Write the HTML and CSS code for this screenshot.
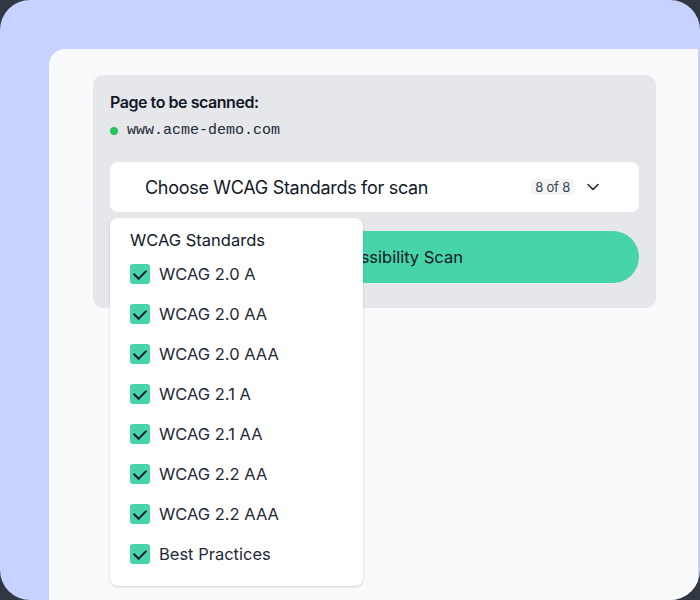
FILE: index.html
```html
<!DOCTYPE html>
<html lang="en">
<head>
  <meta charset="UTF-8" />
  <meta name="viewport" content="width=device-width, initial-scale=1.0" />
  <title>Accessibility Scan</title>
  <link rel="stylesheet" href="styles.css">
</head>
<body>
  <div class="frame">
    <div class="panel">
      <div class="card">
        <div class="label">Page to be scanned:</div>
        <div class="url"><span class="dot"></span>www.acme-demo.com</div>

        <div class="select-wrap">
          <div class="select">
            <span class="select-text">Choose WCAG Standards for scan</span>
            <span class="badge">8 of 8</span>
            <svg class="chevron" width="14" height="14" viewBox="0 0 14 14" fill="none">
              <path d="M2 4.5L7 9.5L12 4.5" stroke="#1f2937" stroke-width="1.6" stroke-linecap="round" stroke-linejoin="round"/>
            </svg>
          </div>

          <div class="dropdown">
            <div class="dropdown-title">WCAG Standards</div>
            <label class="option"><span class="check"></span>WCAG 2.0 A</label>
            <label class="option"><span class="check"></span>WCAG 2.0 AA</label>
            <label class="option"><span class="check"></span>WCAG 2.0 AAA</label>
            <label class="option"><span class="check"></span>WCAG 2.1 A</label>
            <label class="option"><span class="check"></span>WCAG 2.1 AA</label>
            <label class="option"><span class="check"></span>WCAG 2.2 AA</label>
            <label class="option"><span class="check"></span>WCAG 2.2 AAA</label>
            <label class="option"><span class="check"></span>Best Practices</label>
          </div>
        </div>

        <button class="scan-btn">Run Accessibility Scan</button>
      </div>
    </div>
  </div>
</body>
</html>
```

FILE: styles.css
```css
* {
  box-sizing: border-box;
}

body {
  margin: 0;
  background: #323843;
  font-family: Inter, "Noto Sans", sans-serif;
  color: #1f2937;
}

.frame {
  width: 700px;
  height: 600px;
  background: #c7d2fe;
  border-radius: 30px;
  padding: 49px 2px 0 49px;
  overflow: hidden;
}

.panel {
  height: 100%;
  background: #f8fafc;
  border-top-left-radius: 16px;
  padding: 26px 42px 0 44px;
}

.card {
  background: #e5e7eb;
  border-radius: 10px;
  padding: 17px 17px 25px;
}

.label {
  font-size: 16px;
  font-weight: 600;
  line-height: 20px;
  letter-spacing: -0.45px;
  color: #111827;
}

.url {
  display: flex;
  align-items: center;
  margin-top: 9px;
  font-family: "Liberation Mono", "DejaVu Sans Mono", monospace;
  font-size: 15px;
  line-height: 20px;
  color: #1f2937;
}

.dot {
  width: 8px;
  height: 8px;
  border-radius: 50%;
  background: #22c55e;
  margin-right: 9px;
}

.select-wrap {
  position: relative;
  margin-top: 21px;
}

.select {
  display: flex;
  align-items: center;
  height: 50px;
  background: #fff;
  border-radius: 8px;
  padding: 0 39px 0 35px;
}

.select-text {
  flex: 1;
  font-size: 18px;
  letter-spacing: -0.3px;
  color: #111827;
}

.badge {
  background: #f3f4f6;
  border-radius: 3px;
  font-size: 13px;
  line-height: 16px;
  letter-spacing: -0.2px;
  padding: 0 4px;
  color: #374151;
  margin-right: 12px;
}

.dropdown {
  position: absolute;
  top: 56px;
  left: 0;
  width: 253px;
  background: #fff;
  border-radius: 8px;
  box-shadow: 0 1px 3px rgba(0, 0, 0, 0.12), 0 1px 2px rgba(0, 0, 0, 0.06);
  padding: 10px 20px 12px;
  z-index: 2;
}

.dropdown-title {
  font-size: 16.5px;
  line-height: 24px;
  margin-bottom: 2px;
  color: #111827;
}

.option {
  display: flex;
  align-items: center;
  height: 40px;
  font-size: 16.5px;
  color: #1f2937;
}

.check {
  position: relative;
  width: 20px;
  height: 20px;
  border-radius: 3px;
  background: #47d4a9;
  margin-right: 9px;
}

.check::after {
  content: "";
  position: absolute;
  left: 6px;
  top: 3px;
  width: 6px;
  height: 10px;
  border: solid #111827;
  border-width: 0 2px 2px 0;
  transform: rotate(45deg);
}

.scan-btn {
  display: block;
  width: 100%;
  height: 52px;
  margin-top: 19px;
  border: none;
  border-radius: 26px;
  background: #47d4a9;
  font-family: Inter, "Noto Sans", sans-serif;
  font-size: 16.5px;
  color: #111827;
}
```
